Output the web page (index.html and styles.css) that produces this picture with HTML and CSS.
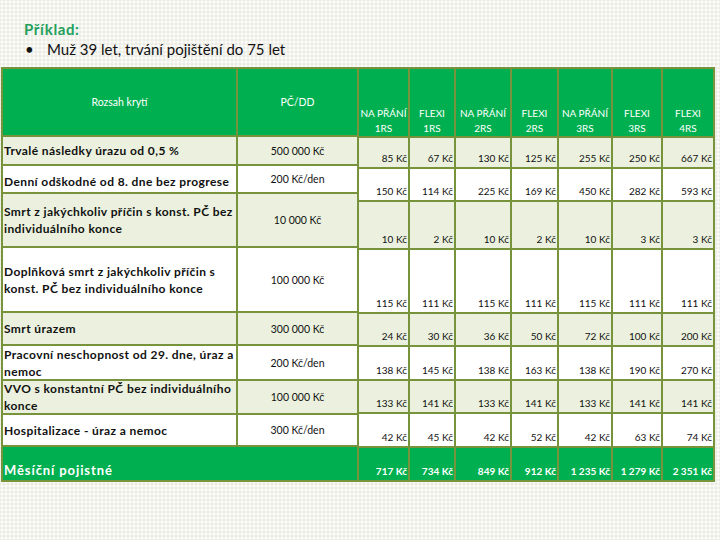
FILE: index.html
```html
<!DOCTYPE html>
<html lang="cs">
<head>
<meta charset="utf-8">
<title>Příklad</title>
<link rel="stylesheet" href="styles.css">
</head>
<body>
<div class="page">
  <h1 class="title">Příklad:</h1>
  <div class="bullet"><span class="dot">•</span><span>Muž 39 let, trvání pojištění do 75 let</span></div>
  <div class="tables">
    <div class="tbl tbl-left">
      <div class="hd">Rozsah krytí</div>
      <div class="hd">PČ/DD</div>

      <div class="name alt">Trvalé následky úrazu od 0,5 %</div>
      <div class="val alt">500 000 Kč</div>

      <div class="name name-low">Denní odškodné od 8. dne bez progrese</div>
      <div class="val">200 Kč/den</div>

      <div class="name alt">Smrt z jakýchkoliv příčin s konst. PČ bez individuálního konce</div>
      <div class="val alt">10 000 Kč</div>

      <div class="name">Doplňková smrt z jakýchkoliv příčin s konst. PČ bez individuálního konce</div>
      <div class="val">100 000 Kč</div>

      <div class="name alt">Smrt úrazem</div>
      <div class="val alt">300 000 Kč</div>

      <div class="name">Pracovní neschopnost od 29. dne, úraz a nemoc</div>
      <div class="val">200 Kč/den</div>

      <div class="name alt">VVO s konstantní PČ bez individuálního konce</div>
      <div class="val alt">100 000 Kč</div>

      <div class="name">Hospitalizace - úraz a nemoc</div>
      <div class="val">300 Kč/den</div>

      <div class="total-label">Měsíční pojistné</div>
    </div>

    <div class="tbl tbl-right">
      <div class="rh"><span>NA PŘÁNÍ</span><span>1RS</span></div>
      <div class="rh"><span>FLEXI</span><span>1RS</span></div>
      <div class="rh"><span>NA PŘÁNÍ</span><span>2RS</span></div>
      <div class="rh"><span>FLEXI</span><span>2RS</span></div>
      <div class="rh"><span>NA PŘÁNÍ</span><span>3RS</span></div>
      <div class="rh"><span>FLEXI</span><span>3RS</span></div>
      <div class="rh"><span>FLEXI</span><span>4RS</span></div>

      <div class="n alt">85 Kč</div><div class="n alt">67 Kč</div><div class="n alt">130 Kč</div><div class="n alt">125 Kč</div><div class="n alt">255 Kč</div><div class="n alt">250 Kč</div><div class="n alt">667 Kč</div>

      <div class="n">150 Kč</div><div class="n">114 Kč</div><div class="n">225 Kč</div><div class="n">169 Kč</div><div class="n">450 Kč</div><div class="n">282 Kč</div><div class="n">593 Kč</div>

      <div class="n alt">10 Kč</div><div class="n alt">2 Kč</div><div class="n alt">10 Kč</div><div class="n alt">2 Kč</div><div class="n alt">10 Kč</div><div class="n alt">3 Kč</div><div class="n alt">3 Kč</div>

      <div class="n">115 Kč</div><div class="n">111 Kč</div><div class="n">115 Kč</div><div class="n">111 Kč</div><div class="n">115 Kč</div><div class="n">111 Kč</div><div class="n">111 Kč</div>

      <div class="n alt">24 Kč</div><div class="n alt">30 Kč</div><div class="n alt">36 Kč</div><div class="n alt">50 Kč</div><div class="n alt">72 Kč</div><div class="n alt">100 Kč</div><div class="n alt">200 Kč</div>

      <div class="n">138 Kč</div><div class="n">145 Kč</div><div class="n">138 Kč</div><div class="n">163 Kč</div><div class="n">138 Kč</div><div class="n">190 Kč</div><div class="n">270 Kč</div>

      <div class="n alt">133 Kč</div><div class="n alt">141 Kč</div><div class="n alt">133 Kč</div><div class="n alt">141 Kč</div><div class="n alt">133 Kč</div><div class="n alt">141 Kč</div><div class="n alt">141 Kč</div>

      <div class="n">42 Kč</div><div class="n">45 Kč</div><div class="n">42 Kč</div><div class="n">52 Kč</div><div class="n">42 Kč</div><div class="n">63 Kč</div><div class="n">74 Kč</div>

      <div class="n tot">717 Kč</div><div class="n tot">734 Kč</div><div class="n tot">849 Kč</div><div class="n tot">912 Kč</div><div class="n tot">1 235 Kč</div><div class="n tot">1 279 Kč</div><div class="n tot">2 351 Kč</div>
    </div>
  </div>
</div>
</body>
</html>
```

FILE: styles.css
```css
html, body {
  margin: 0;
  padding: 0;
}
body {
  width: 720px;
  height: 540px;
  overflow: hidden;
  font-family: Lato, "Open Sans", "Liberation Sans", sans-serif;
  color: #111;
  background-color: #f3f3ee;
  background-image:
    radial-gradient(circle, #fcfcfa 0.9px, transparent 1.3px),
    radial-gradient(circle, #e9e9e2 0.6px, transparent 1px);
  background-size: 4px 4px, 4px 4px;
  background-position: 0 0, 2px 2px;
}
.page {
  display: flex;
  flex-direction: column;
}
.title {
  margin: 20px 0 0 24px;
  font-size: 15px;
  line-height: 18px;
  font-weight: 700;
  letter-spacing: 0.6px;
  color: #22a05b;
}
.bullet {
  display: flex;
  margin: 1px 0 0 25px;
  font-size: 15px;
  line-height: 20px;
  color: #111;
}
.dot {
  width: 22px;
}
.tables {
  display: flex;
  margin: 8px 0 0 1px;
}
.tbl {
  display: grid;
  gap: 2px;
  background: #77933c;
}
.tbl-left {
  padding: 2px;
  grid-template-columns: 233px 119px;
  grid-template-rows: 66px 27px 26px 52px 63px 31px 33px 32px 30px 33px;
}
.tbl-right {
  padding: 2px 2px 2px 0;
  grid-template-columns: 49px 44px 54px 45px 52px 48px 50px;
  grid-template-rows: 67px 29px 31px 46px 62px 31px 32px 31px 32px 32px;
}
.tbl > div {
  background: #ffffff;
}
.tbl > div.alt {
  background: #ebf1de;
}
.tbl > .hd {
  background: #00b050;
  color: #fff;
  display: flex;
  align-items: center;
  justify-content: center;
  font-size: 10.5px;
}
.name {
  display: flex;
  align-items: center;
  padding-left: 1px;
  font-size: 12px;
  font-weight: 700;
  line-height: 17px;
  letter-spacing: 0.4px;
}
.name-low {
  padding-top: 5px;
}
.val {
  display: flex;
  align-items: center;
  justify-content: center;
  font-size: 10.5px;
}
.tbl > .total-label {
  grid-column: span 2;
  background: #00b050;
  color: #fff;
  display: flex;
  align-items: flex-end;
  padding: 0 0 1px 1px;
  font-size: 13px;
  line-height: 17px;
  font-weight: 700;
  letter-spacing: 0.9px;
}
.tbl > .rh {
  background: #00b050;
  color: #fff;
  display: flex;
  flex-direction: column;
  justify-content: flex-end;
  align-items: center;
  font-size: 10px;
  line-height: 15px;
  white-space: nowrap;
}
.n {
  display: flex;
  align-items: flex-end;
  justify-content: flex-end;
  padding: 0 1px 3px 0;
  font-size: 10px;
  line-height: 12px;
  white-space: nowrap;
}
.tbl > .n.tot {
  background: #00b050;
  color: #fff;
  font-weight: 700;
}
```
